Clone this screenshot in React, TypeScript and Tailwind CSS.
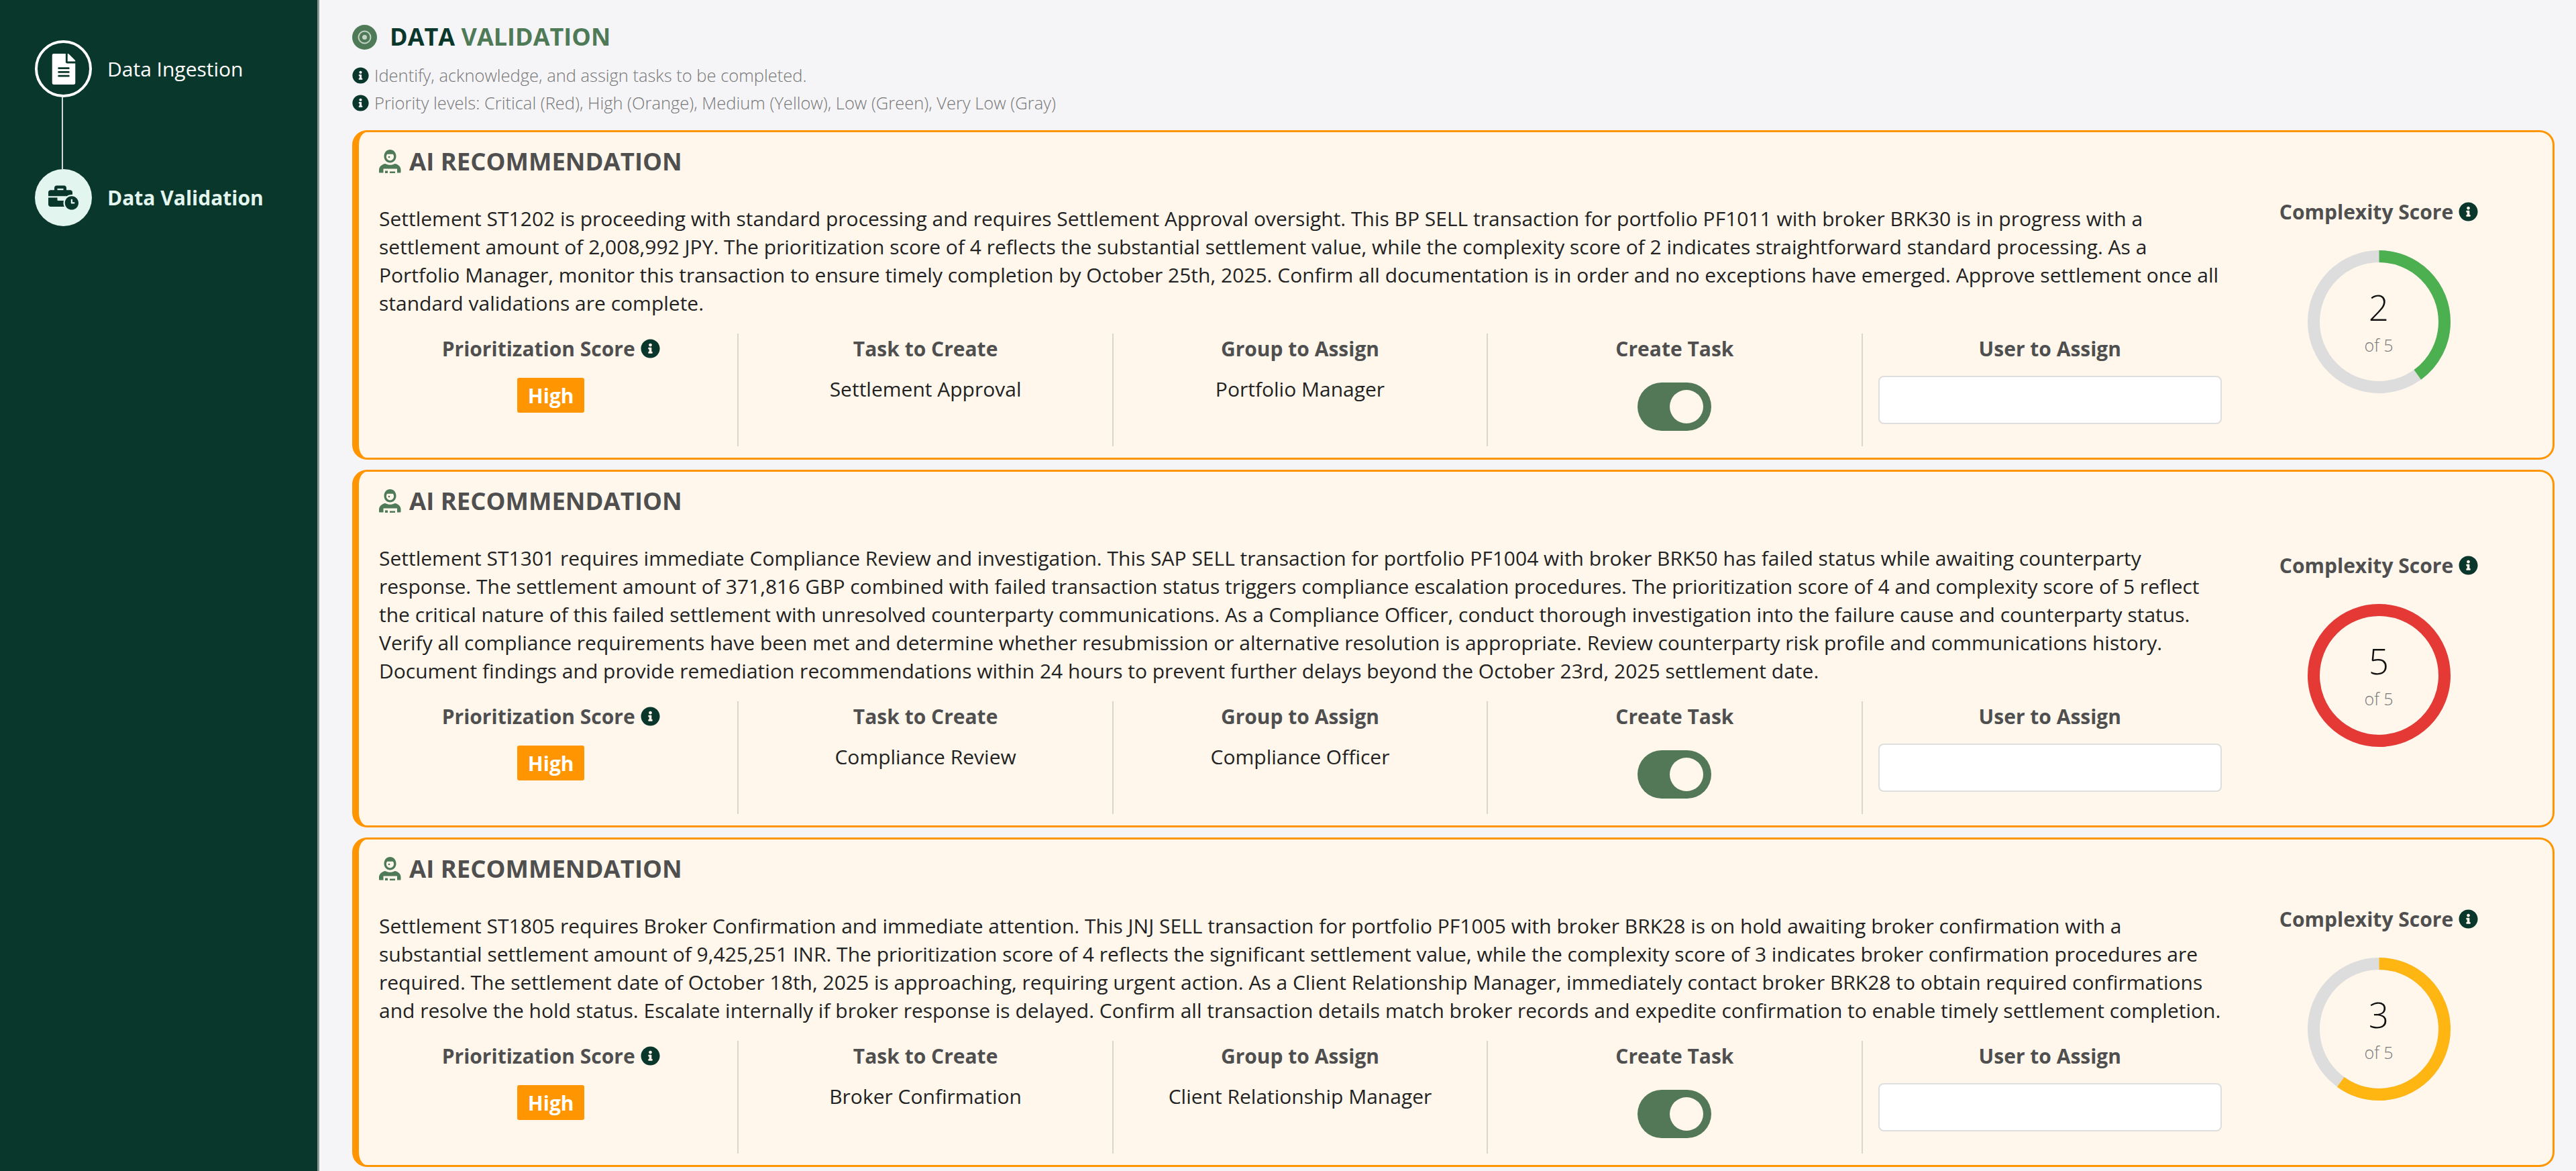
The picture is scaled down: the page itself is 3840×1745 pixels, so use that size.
import React from "react";
import { FaFileAlt, FaBusinessTime, FaInfoCircle } from "react-icons/fa";

const cards = [
  {
    text: "Settlement ST1202 is proceeding with standard processing and requires Settlement Approval oversight. This BP SELL transaction for portfolio PF1011 with broker BRK30 is in progress with a settlement amount of 2,008,992 JPY. The prioritization score of 4 reflects the substantial settlement value, while the complexity score of 2 indicates straightforward standard processing. As a Portfolio Manager, monitor this transaction to ensure timely completion by October 25th, 2025. Confirm all documentation is in order and no exceptions have emerged. Approve settlement once all standard validations are complete.",
    task: "Settlement Approval",
    group: "Portfolio Manager",
    score: 2,
    color: "#4caf50",
  },
  {
    text: "Settlement ST1301 requires immediate Compliance Review and investigation. This SAP SELL transaction for portfolio PF1004 with broker BRK50 has failed status while awaiting counterparty response. The settlement amount of 371,816 GBP combined with failed transaction status triggers compliance escalation procedures. The prioritization score of 4 and complexity score of 5 reflect the critical nature of this failed settlement with unresolved counterparty communications. As a Compliance Officer, conduct thorough investigation into the failure cause and counterparty status. Verify all compliance requirements have been met and determine whether resubmission or alternative resolution is appropriate. Review counterparty risk profile and communications history. Document findings and provide remediation recommendations within 24 hours to prevent further delays beyond the October 23rd, 2025 settlement date.",
    task: "Compliance Review",
    group: "Compliance Officer",
    score: 5,
    color: "#e53935",
  },
  {
    text: "Settlement ST1805 requires Broker Confirmation and immediate attention. This JNJ SELL transaction for portfolio PF1005 with broker BRK28 is on hold awaiting broker confirmation with a substantial settlement amount of 9,425,251 INR. The prioritization score of 4 reflects the significant settlement value, while the complexity score of 3 indicates broker confirmation procedures are required. The settlement date of October 18th, 2025 is approaching, requiring urgent action. As a Client Relationship Manager, immediately contact broker BRK28 to obtain required confirmations and resolve the hold status. Escalate internally if broker response is delayed. Confirm all transaction details match broker records and expedite confirmation to enable timely settlement completion.",
    task: "Broker Confirmation",
    group: "Client Relationship Manager",
    score: 3,
    color: "#ffb612",
  },
];

function AgentIcon() {
  return (
    <svg viewBox="0 0 33 36" className="w-[33px] h-[36px] shrink-0" fill="#4f7a58">
      <path d="M7.5 11C7.5 5 11.500 1 16.500 1s9 4 9 10c0 5.500-4 9.500-9 9.500s-9-4-9-9.500zm3.400 .5c0 3.200 2.500 5.800 5.600 5.800s5.600-2.600 5.600-5.800c0-1.500-.5-2.800-1.300-3.800H12.200c-.8 1-1.300 2.300-1.300 3.800z" />
      <circle cx="15" cy="12" r="1.300" />
      <path d="M9.500 22c2 1.200 4.500 1.800 7 1.800s5-.6 7-1.800c5 .5 9 4.500 9 9v3.500c0 .6-.5 1-1 1h-4.500v-6H6.500v6H1c-.5 0-1-.4-1-1V31c0-4.500 4.500-8.500 9.500-9z" />
      <rect x="9" y="32.500" width="4" height="3.500" />
      <rect x="16" y="33.500" width="8" height="2.500" />
    </svg>
  );
}

function TargetIcon() {
  return (
    <svg viewBox="0 0 37 37" className="w-[37px] h-[37px] shrink-0">
      <circle cx="18.500" cy="18.500" r="18.500" fill="#4f7a58" />
      <circle cx="18.500" cy="18.500" r="9" fill="none" stroke="#c3d3c6" strokeWidth="2" />
      <circle cx="18.500" cy="18.500" r="3.500" fill="#c3d3c6" />
    </svg>
  );
}

function Donut({ score, color }: { score: number; color: string }) {
  return (
    <div className="relative w-[213px] h-[213px] mt-[34px]">
      <svg viewBox="0 0 213 213" className="w-[213px] h-[213px] -rotate-90">
        <circle cx="106.500" cy="106.500" r="97.500" fill="none" stroke="#dddddd" strokeWidth="18" />
        <circle
          cx="106.500"
          cy="106.500"
          r="97.500"
          fill="none"
          stroke={color}
          strokeWidth="18"
          pathLength={100}
          strokeDasharray={`${score * 20} 100`}
        />
      </svg>
      <div className="absolute inset-0 flex flex-col items-center pt-[55px]">
        <span className="h-[60px] leading-[60px] text-[53px] font-light text-[#111111]">{score}</span>
        <span className="mt-[13px] h-[26px] leading-[26px] text-[25px] font-light text-[#777777]">of 5</span>
      </div>
    </div>
  );
}

function ColTitle({ children }: { children: React.ReactNode }) {
  return (
    <div className="h-[44px] flex items-center justify-center gap-[8px] text-[30px] font-bold text-[#4f4f4f]">
      {children}
    </div>
  );
}

function Card({ c }: { c: (typeof cards)[number] }) {
  return (
    <div className="flex rounded-[22px] border-[3px] border-l-[10px] border-[#ff9500] bg-[#fff7ec] pl-[8px] pt-[20px] pb-[17px]">
      <div className="w-[2792px] shrink-0">
        <div className="pl-[22px] h-[46px] flex items-center gap-[12px]">
          <AgentIcon />
          <span className="text-[36.500px] font-bold text-[#4f4f4f]">AI RECOMMENDATION</span>
        </div>
        <p className="mt-[42px] pl-[22px] pr-[22px] text-[30px] leading-[42px] text-[#222222]">{c.text}</p>
        <div className="mt-[24px] grid grid-cols-5 h-[168px]">
          <div className="border-r-2 border-[#d9d6cf]">
            <ColTitle>
              Prioritization Score <FaInfoCircle size={29} color="#0a372b" />
            </ColTitle>
            <div className="mt-[22px] flex justify-center">
              <span className="w-[100px] h-[52px] flex items-center justify-center rounded-[3px] bg-[#ff9500] text-white text-[30px] font-bold">
                High
              </span>
            </div>
          </div>
          <div className="border-r-2 border-[#d9d6cf]">
            <ColTitle>Task to Create</ColTitle>
            <div className="mt-[18px] leading-[42px] text-[30px] text-center text-[#222222]">{c.task}</div>
          </div>
          <div className="border-r-2 border-[#d9d6cf]">
            <ColTitle>Group to Assign</ColTitle>
            <div className="mt-[18px] leading-[42px] text-[30px] text-center text-[#222222]">{c.group}</div>
          </div>
          <div className="border-r-2 border-[#d9d6cf]">
            <ColTitle>Create Task</ColTitle>
            <div className="mt-[29px] flex justify-center">
              <span className="w-[110px] h-[72px] rounded-full bg-[#537857] flex items-center justify-end pr-[12px]">
                <span className="w-[50px] h-[50px] rounded-full bg-[#fff7ec]" />
              </span>
            </div>
          </div>
          <div>
            <ColTitle>User to Assign</ColTitle>
            <div className="mt-[19px] px-[23px]">
              <input className="w-full h-[72px] rounded-[8px] border-2 border-[#dedede] bg-white" />
            </div>
          </div>
        </div>
      </div>
      <div className="w-[422px] shrink-0 flex flex-col items-center justify-center">
        <div className="h-[42px] -mt-[2px] mb-[2px] flex items-center gap-[8px] text-[30px] font-bold text-[#4f4f4f]">
          Complexity Score <FaInfoCircle size={29} color="#0a372b" />
        </div>
        <Donut score={c.score} color={c.color} />
      </div>
    </div>
  );
}

export default function App() {
  return (
    <div className="flex h-[1745px] overflow-hidden bg-[#f5f5f7] font-['Open_Sans',sans-serif]">
      <aside className="w-[476px] shrink-0 bg-[#0a372b] border-r-[3px] border-[#8a9491] pt-[60px] pl-[52px]">
        <div className="flex items-center gap-[23px]">
          <div className="w-[85px] h-[85px] rounded-full border-4 border-white flex items-center justify-center">
            <FaFileAlt size={46} color="#ffffff" />
          </div>
          <span className="text-[30px] text-white">Data Ingestion</span>
        </div>
        <div className="ml-[40px] w-[2px] h-[107px] bg-[#cfd8d5]" />
        <div className="flex items-center gap-[23px]">
          <div className="w-[85px] h-[85px] rounded-full bg-[#e3f5ef] flex items-center justify-center">
            <FaBusinessTime size={45} color="#0a372b" />
          </div>
          <span className="text-[30px] font-bold text-[#e3f5ef]">Data Validation</span>
        </div>
      </aside>
      <main className="flex-1 min-w-0 pl-[49px] pr-[32px] pt-[32px]">
        <div className="h-[46px] flex items-center gap-[19px]">
          <TargetIcon />
          <h1 className="text-[36px] font-bold text-[#0a372b]">
            DATA <span className="text-[#4f7a58]">VALIDATION</span>
          </h1>
        </div>
        <div className="mt-[14px] mb-[20px] text-[25.500px] leading-[41px] font-light text-[#777777]">
          <div className="flex items-center gap-[8px]">
            <FaInfoCircle size={25} color="#0a372b" />
            Identify, acknowledge, and assign tasks to be completed.
          </div>
          <div className="flex items-center gap-[8px]">
            <FaInfoCircle size={25} color="#0a372b" />
            Priority levels: Critical (Red), High (Orange), Medium (Yellow), Low (Green), Very Low (Gray)
          </div>
        </div>
        <div className="flex flex-col gap-[15px]">
          {cards.map((c) => (
            <Card key={c.task} c={c} />
          ))}
        </div>
      </main>
    </div>
  );
}
